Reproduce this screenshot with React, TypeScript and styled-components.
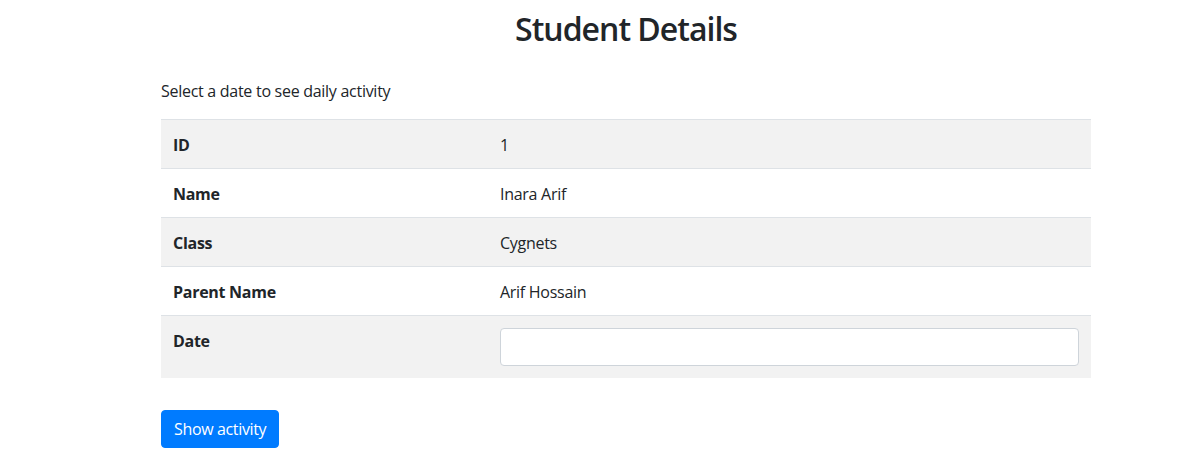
import React from "react";
import styled, { createGlobalStyle } from "styled-components";

const GlobalStyle = createGlobalStyle`
  html, body { margin: 0; padding: 0; background: #fff; }
  body {
    font-family: "Open Sans", "Noto Sans", sans-serif;
    font-size: 16px;
    line-height: 1.5;
    color: #212529;
    letter-spacing: -0.28px;
  }
  * { box-sizing: border-box; }
`;

const Page = styled.main`
  width: 930px;
  margin-left: 161px;
  padding-top: 10px;
`;

const Title = styled.h2`
  margin: 0 0 31px;
  font-size: 32px;
  line-height: 38px;
  font-weight: 600;
  letter-spacing: -1px;
  text-align: center;
`;

const Intro = styled.p`
  margin: 0 0 16px;
  font-size: 16px;
  line-height: 24px;
`;

const Table = styled.table`
  width: 100%;
  border-collapse: collapse;
`;

const Row = styled.tr<{ $striped?: boolean }>`
  background: ${(p) => (p.$striped ? "#f2f2f2" : "#fff")};
`;

const HeadCell = styled.th`
  width: 327px;
  padding: 13px 12px 11px;
  border-top: 1px solid #dee2e6;
  text-align: left;
  vertical-align: top;
  font-weight: 700;
  line-height: 24px;
`;

const Cell = styled.td`
  padding: 13px 12px 11px;
  border-top: 1px solid #dee2e6;
  vertical-align: top;
  line-height: 24px;
`;

const InputCell = styled(Cell)`
  padding: 12px;
`;

const DateInput = styled.input`
  display: block;
  width: 100%;
  height: 38px;
  padding: 6px 12px;
  border: 1px solid #ced4da;
  border-radius: 4px;
  background: #fff;
  font: inherit;
  color: #495057;
`;

const Button = styled.button`
  margin-top: 32px;
  padding: 6px 12px;
  border: 1px solid #007bff;
  border-radius: 4px;
  background: #007bff;
  color: #fff;
  font-family: inherit;
  font-size: 16px;
  line-height: 24px;
  letter-spacing: -0.35px;
  cursor: pointer;
`;

const rows = [
  { label: "ID", value: "1" },
  { label: "Name", value: "Inara Arif" },
  { label: "Class", value: "Cygnets" },
  { label: "Parent Name", value: "Arif Hossain" },
];

export default function App() {
  return (
    <>
      <GlobalStyle />
      <Page>
        <Title>Student Details</Title>
        <Intro>Select a date to see daily activity</Intro>
        <Table>
          <tbody>
            {rows.map((r, i) => (
              <Row key={r.label} $striped={i % 2 === 0}>
                <HeadCell>{r.label}</HeadCell>
                <Cell>{r.value}</Cell>
              </Row>
            ))}
            <Row $striped>
              <HeadCell>Date</HeadCell>
              <InputCell>
                <DateInput type="text" aria-label="Date" />
              </InputCell>
            </Row>
          </tbody>
        </Table>
        <Button type="button">Show activity</Button>
      </Page>
    </>
  );
}
